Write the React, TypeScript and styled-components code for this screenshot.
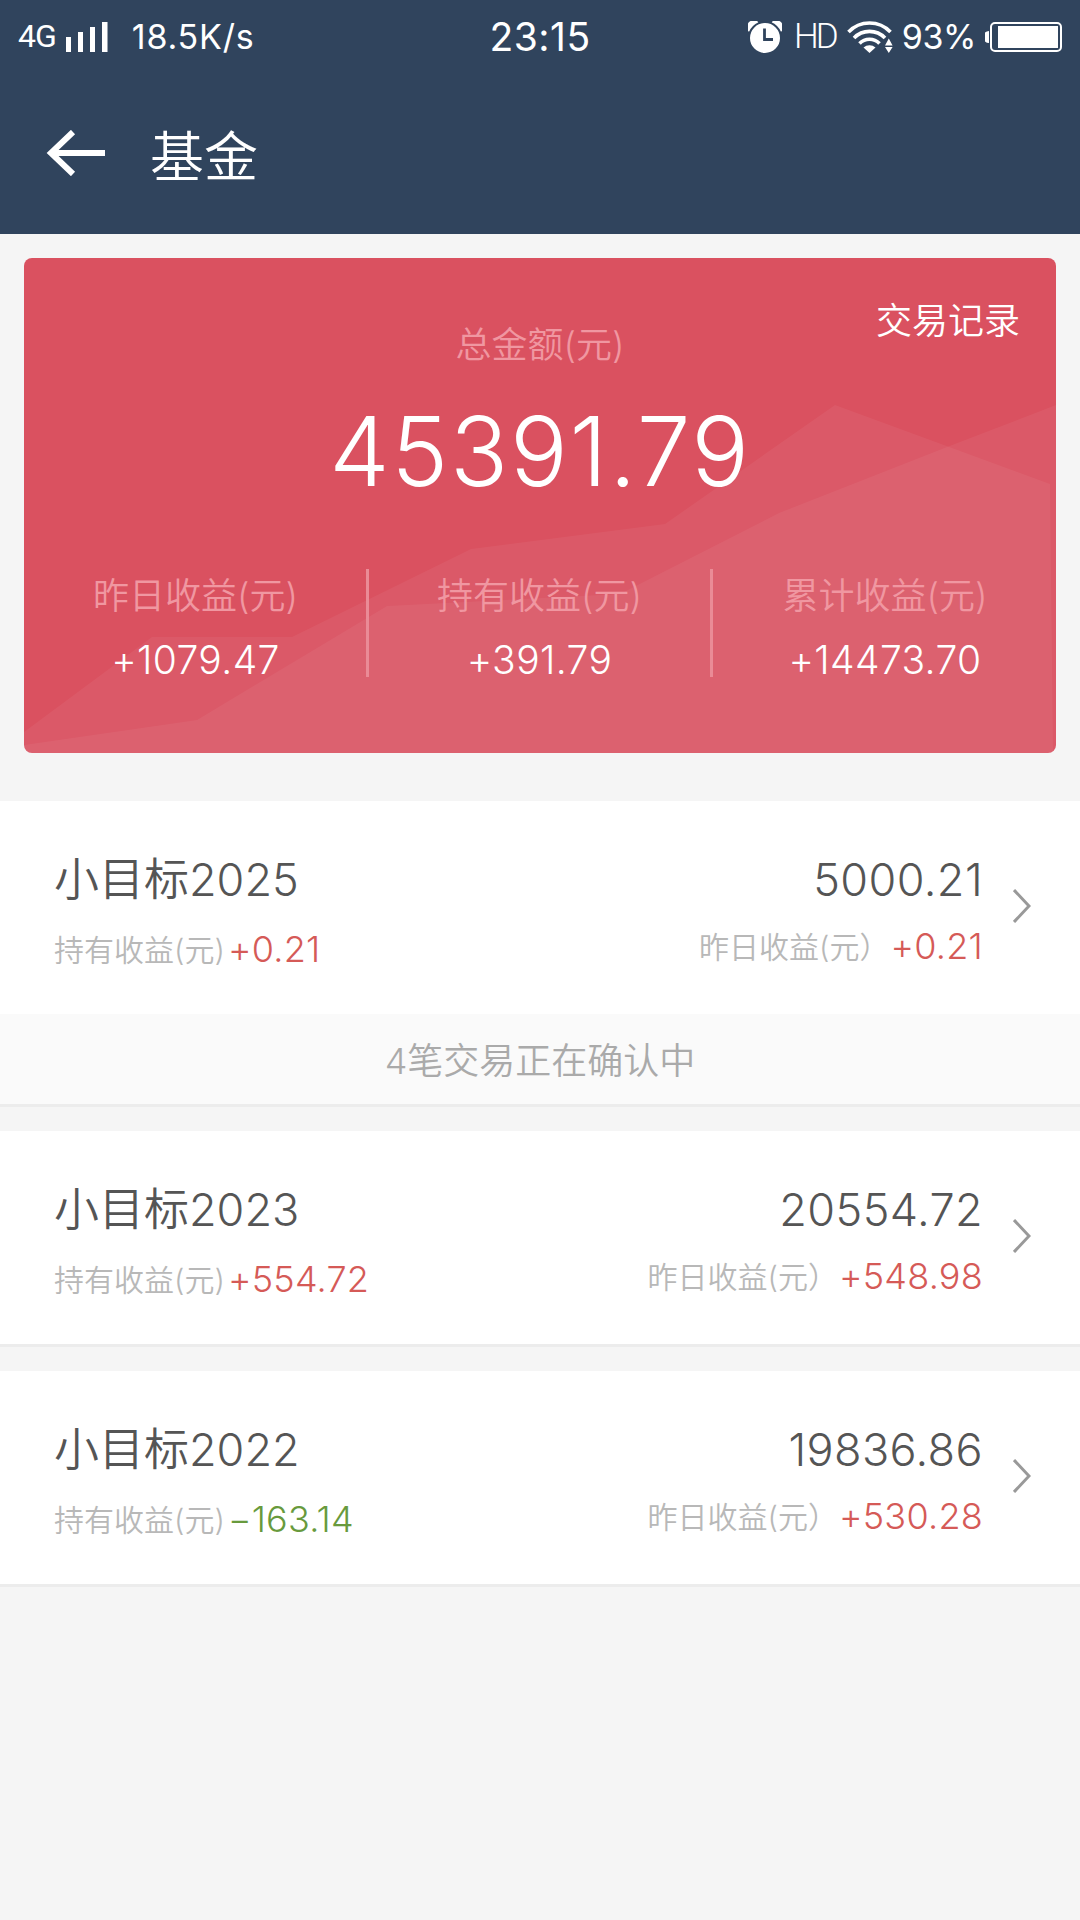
import React from 'react';
import styled, { createGlobalStyle } from 'styled-components';

const Global = createGlobalStyle`
  *{box-sizing:border-box}
  html,body{margin:0;padding:0;background:#f5f5f5}
  body{font-family:Inter,"Noto Sans CJK SC",sans-serif;font-weight:350;color:#555;white-space:nowrap}
`;

const Screen = styled.div`
  width:1080px;height:1920px;overflow:hidden;background:#f5f5f5;
`;
const Header = styled.header`
  height:234px;background:#30445d;color:#fff;
`;
const StatusBar = styled.div`
  height:74px;padding:0 18px;display:grid;grid-template-columns:1fr auto 1fr;align-items:center;
`;
const StatusSide = styled.div<{ $end?: boolean }>`
  display:flex;align-items:center;justify-content:${p => (p.$end ? 'flex-end' : 'flex-start')};
`;
const StatusText = styled.span<{ $size: number; $gap?: number; $track?: number }>`
  font-size:${p => p.$size}px;line-height:40px;font-weight:400;
  margin-left:${p => p.$gap ?? 0}px;letter-spacing:${p => p.$track ?? 0}px;
`;
const NetworkTag = styled(StatusText)<{ $weight: number; $lift?: number }>`
  font-family:Roboto,sans-serif;font-weight:${p => p.$weight};margin-bottom:${p => p.$lift ?? 0}px;
`;
const Glyph = styled.svg<{ $gap?: number }>`
  display:block;flex:none;margin-left:${p => p.$gap ?? 0}px;
`;
const NavBar = styled.div`
  height:160px;display:flex;align-items:center;padding:0 0 2px 46px;
`;
const PageTitle = styled.h1`
  margin:10px 0 0 44px;font-size:54px;line-height:80px;font-weight:350;
`;
const Card = styled.section`
  margin:24px 24px 48px;height:495px;border-radius:8px;overflow:hidden;color:#fff;
  background:#da5160;display:grid;isolation:isolate;
`;
const Backdrop = styled.svg`
  grid-area:1/1;z-index:-1;display:block;
`;
const CardBody = styled.div`
  grid-area:1/1;display:flex;flex-direction:column;
`;
const RecordLink = styled.a`
  align-self:flex-end;margin:36px 36px 0 0;font-size:36px;line-height:54px;
`;
const Total = styled.div`
  height:221px;margin-top:-30px;display:flex;flex-direction:column;align-items:center;
`;
const CardLabel = styled.div`
  font-size:36px;line-height:54px;color:#f097a1;
`;
const TotalValue = styled.div`
  font-size:96px;line-height:116px;margin-top:21px;font-weight:300;letter-spacing:1.8px;
`;
const Stats = styled.div`
  display:grid;grid-template-columns:repeat(3,1fr);margin:30px -1px 0 1px;height:108px;
`;
const Stat = styled.div`
  display:flex;flex-direction:column;align-items:center;border-right:3px solid #ea8b96;
  &:last-child{border-right:0}
`;
const StatValue = styled.div`
  font-size:39px;line-height:34px;margin-top:20px;letter-spacing:.4px;
`;
const Fund = styled.article`
  background:#fff;border-bottom:3px solid #ececec;margin-bottom:24px;
`;
const FundRow = styled.div`
  height:213px;padding:0 49px 0 54px;display:flex;align-items:flex-start;
`;
const FundSide = styled.div<{ $end?: boolean }>`
  display:flex;flex-direction:column;padding-top:46px;
  align-items:${p => (p.$end ? 'flex-end' : 'flex-start')};
  ${p => (p.$end ? 'margin-left:auto;' : '')}
`;
const FundTitle = styled.div<{ $track?: number }>`
  font-size:45px;line-height:66px;letter-spacing:${p => p.$track ?? 0}px;
`;
const ProfitLine = styled.div<{ $top: number }>`
  display:flex;align-items:baseline;margin-top:${p => p.$top}px;line-height:50px;
`;
const ProfitLabel = styled.span`
  font-size:30px;color:#b8b8b8;transform:translateY(-1px);
`;
const Profit = styled.span<{ $down?: boolean; $gap: number }>`
  font-size:36px;margin-left:${p => p.$gap}px;color:${p => (p.$down ? '#689a3d' : '#d55a57')};
  letter-spacing:.25px;
`;
const ChevronBox = styled.div`
  align-self:center;margin-left:30px;
`;
const Pending = styled.div`
  height:90px;background:#fafafa;color:#aaa;font-size:36px;line-height:94px;text-align:center;
`;

type FundItem = { name: string; amount: string; held: string; daily: string; pending?: string };
const funds: FundItem[] = [
  { name: '小目标2025', amount: '5000.21', held: '+0.21', daily: '+0.21', pending: '4笔交易正在确认中' },
  { name: '小目标2023', amount: '20554.72', held: '+554.72', daily: '+548.98' },
  { name: '小目标2022', amount: '19836.86', held: '−163.14', daily: '+530.28' },
];
const stats = [
  ['昨日收益(元)', '+1079.47'],
  ['持有收益(元)', '+391.79'],
  ['累计收益(元)', '+14473.70'],
];

const SignalIcon = () => (
  <Glyph $gap={10} width="43" height="30" fill="#fff">
    <path d="M0 15h5v15H0zM12 10h5v20h-5zM24 5h5v25h-5zM36 0h5.500v30H36z" />
  </Glyph>
);
const AlarmIcon = () => (
  <Glyph width="34" height="32" viewBox="0 0 34 32">
    <path d="M1 11A6.300 6.300 0 0 1 10.500 1.200M33 11A6.300 6.300 0 0 0 23.500 1.200" fill="#fff" />
    <circle cx="17" cy="17" r="16" fill="#fff" stroke="#30445d" strokeWidth="2" />
    <path d="M16.500 7.500v11H25" fill="none" stroke="#30445d" strokeWidth="2.800" />
  </Glyph>
);
const WifiIcon = () => (
  <Glyph $gap={11} width="46" height="32" viewBox="0 0 46 32">
    <g fill="none" stroke="#fff" strokeWidth="3.600">
      <path d="M1.500 11a29 29 0 0 1 42 0" />
      <path d="M7 17a21.500 21.500 0 0 1 31 0" />
      <path d="M12.500 22.500a14 14 0 0 1 20 0" />
    </g>
    <path d="M16.500 26.500a9 9 0 0 1 12 0L22.500 32z" fill="#fff" />
    <path d="M38 24.500l3.800-7 3.800 7zM38 26h7.600l-3.800 6z" fill="#fff" />
  </Glyph>
);
const BatteryIcon = () => (
  <Glyph $gap={9} width="77" height="30" viewBox="0 0 77 30">
    <path d="M4 9v12a6 6 0 0 1 0-12z" fill="#fff" />
    <rect x="6" y="1" width="70" height="28" rx="4" fill="none" stroke="#fff" strokeWidth="2" />
    <rect x="13" y="4" width="60" height="22" fill="#fff" />
  </Glyph>
);

export default function App() {
  return (
    <Screen>
      <Global />
      <Header>
        <StatusBar>
          <StatusSide>
            <NetworkTag $size={32} $track={-1} $lift={2} $weight={400}>4G</NetworkTag>
            <SignalIcon />
            <StatusText $size={34} $gap={23} $track={0.8}>18.5K/s</StatusText>
          </StatusSide>
          <StatusText $size={39} $track={0.5}>23:15</StatusText>
          <StatusSide $end>
            <AlarmIcon />
            <NetworkTag $size={35} $gap={12} $weight={300} $track={-3}>HD</NetworkTag>
            <WifiIcon />
            <StatusText $size={34} $gap={9} $track={-0.4}>93%</StatusText>
            <BatteryIcon />
          </StatusSide>
        </StatusBar>
        <NavBar>
          <svg width="60" height="46" viewBox="0 0 60 46" fill="none" stroke="#fff" strokeWidth="6">
            <path d="M27 2L5 23l22 21M5 23h54" />
          </svg>
          <PageTitle>基金</PageTitle>
        </NavBar>
      </Header>
      <Card>
        <Backdrop width="1032" height="495" viewBox="24 258 1032 495" fill="#fff" fillOpacity="0.052">
          <path d="M24 732L152 637H292L471 549L665 524L835 405L1050 484L1053 753H24z" />
          <path d="M24 745L197 720L387 606L620 594L779 513L947 447L1056 405V753H24z" />
        </Backdrop>
        <CardBody>
          <RecordLink>交易记录</RecordLink>
          <Total>
            <CardLabel>总金额(元)</CardLabel>
            <TotalValue>45391.79</TotalValue>
          </Total>
          <Stats>
            {stats.map(([label, value]) => (
              <Stat key={label}>
                <CardLabel>{label}</CardLabel>
                <StatValue>{value}</StatValue>
              </Stat>
            ))}
          </Stats>
        </CardBody>
      </Card>
      {funds.map(f => (
        <Fund key={f.name}>
          <FundRow>
            <FundSide>
              <FundTitle>{f.name}</FundTitle>
              <ProfitLine $top={11}>
                <ProfitLabel>持有收益(元)</ProfitLabel>
                <Profit $gap={3} $down={f.held.startsWith('−')}>{f.held}</Profit>
              </ProfitLine>
            </FundSide>
            <FundSide $end>
              <FundTitle $track={0.4}>{f.amount}</FundTitle>
              <ProfitLine $top={8}>
                <ProfitLabel>昨日收益(元）</ProfitLabel>
                <Profit $gap={1}>{f.daily}</Profit>
              </ProfitLine>
            </FundSide>
            <ChevronBox>
              <svg width="18" height="34" viewBox="0 0 18 34" fill="none" stroke="#999" strokeWidth="3">
                <path d="M1 1l15 16L1 33" />
              </svg>
            </ChevronBox>
          </FundRow>
          {f.pending && <Pending>{f.pending}</Pending>}
        </Fund>
      ))}
    </Screen>
  );
}
